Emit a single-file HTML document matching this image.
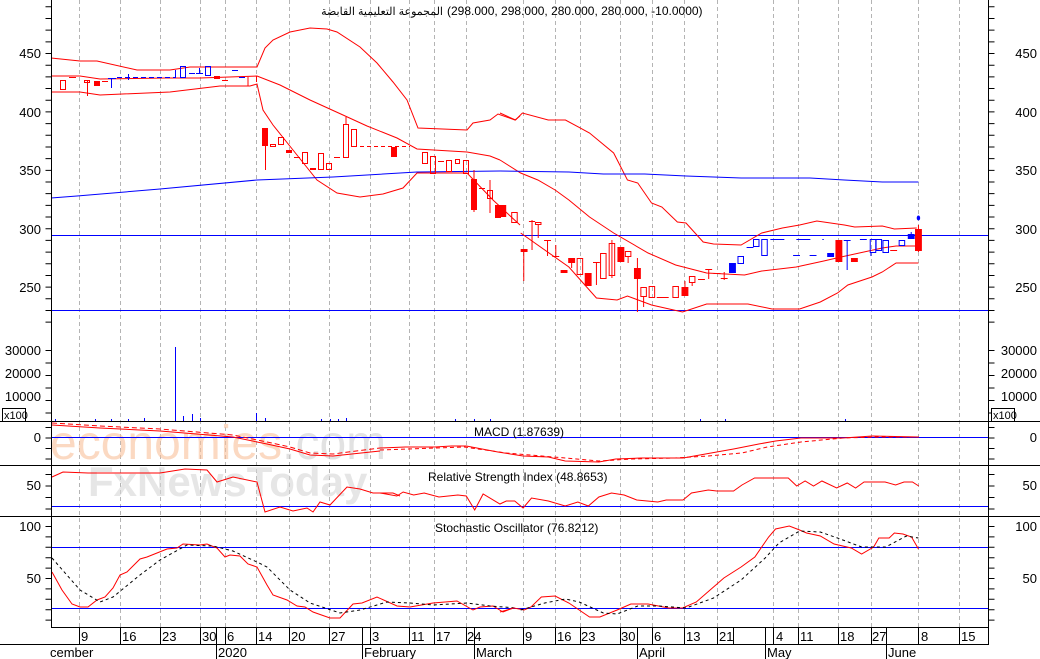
<!DOCTYPE html>
<html><head><meta charset="utf-8"><style>
html,body{margin:0;padding:0;background:#fff;}
svg{display:block;font-family:"Liberation Sans","Noto Sans CJK SC",sans-serif;}
</style></head><body>
<svg width="1040" height="659" viewBox="0 0 1040 659" xmlns="http://www.w3.org/2000/svg">
<rect width="1040" height="659" fill="#fff"/>
<!-- gridlines -->
<g stroke="#b4b4b4" stroke-width="1" stroke-dasharray="4 3">
<line x1="79.5" y1="0" x2="79.5" y2="627"/><line x1="120.5" y1="0" x2="120.5" y2="627"/><line x1="160.5" y1="0" x2="160.5" y2="627"/><line x1="200.5" y1="0" x2="200.5" y2="627"/><line x1="225.5" y1="0" x2="225.5" y2="627"/><line x1="256.5" y1="0" x2="256.5" y2="627"/><line x1="289.5" y1="0" x2="289.5" y2="627"/><line x1="329.5" y1="0" x2="329.5" y2="627"/><line x1="370.5" y1="0" x2="370.5" y2="627"/><line x1="409.5" y1="0" x2="409.5" y2="627"/><line x1="434.5" y1="0" x2="434.5" y2="627"/><line x1="466.5" y1="0" x2="466.5" y2="627"/><line x1="523.5" y1="0" x2="523.5" y2="627"/><line x1="555.5" y1="0" x2="555.5" y2="627"/><line x1="580.5" y1="0" x2="580.5" y2="627"/><line x1="620.5" y1="0" x2="620.5" y2="627"/><line x1="652.5" y1="0" x2="652.5" y2="627"/><line x1="684.5" y1="0" x2="684.5" y2="627"/><line x1="717.5" y1="0" x2="717.5" y2="627"/><line x1="773.5" y1="0" x2="773.5" y2="627"/><line x1="798.5" y1="0" x2="798.5" y2="627"/><line x1="838.5" y1="0" x2="838.5" y2="627"/><line x1="871.5" y1="0" x2="871.5" y2="627"/><line x1="918.5" y1="0" x2="918.5" y2="627"/><line x1="959.5" y1="0" x2="959.5" y2="627"/>
</g>
<!-- watermark -->
<text x="50" y="459" font-size="48" fill="#f9c09a" opacity="0.6" font-family="Liberation Sans,sans-serif">economies<tspan fill="#d0d0d0">.com</tspan></text>
<text x="88" y="496" font-size="42" fill="#d6d6d6" opacity="0.6" font-weight="bold" font-family="Liberation Sans,sans-serif">FxNewsToday</text>

<!-- horizontal blue lines -->
<g stroke="#0000ff" stroke-width="1">
<line x1="51" y1="235.5" x2="989" y2="235.5"/><line x1="51" y1="310.5" x2="989" y2="310.5"/>
<line x1="51" y1="437.5" x2="989" y2="437.5"/>
<line x1="51" y1="506.5" x2="989" y2="506.5"/>
<line x1="51" y1="547.5" x2="989" y2="547.5"/><line x1="51" y1="608.5" x2="989" y2="608.5"/>
</g>

<!-- main left part bands (real coords) -->
<g fill="none" stroke="#ff0000" stroke-width="1">
<polyline points="51,58 80,61 97,61 137,70 170,70 190,67 257,67 265,48 273,40 290,32 310,28 327,29 337,32 360,47 377,63 393,82 407,100 418,128 467,130 473,123 490,120 498,114 515,120 520,116"/>
<polyline points="51,76 80,76 100,79 165,78 200,78 257,76 280,85 310,100 343,115 367,126 397,138 417,149 467,152 490,156 500,160"/>
<polyline points="51,92 80,92 100,95 170,92 220,86 250,86 257,84 263,110 273,125 293,150 317,180 337,193 360,197 383,194 403,188 417,173 467,173 493,200 507,213 520,225"/>
</g>
<polyline fill="none" stroke="#0000ff" points="51,198 77,196 160,189 257,180 333,177 417,172 500,171"/>
<g fill="none" stroke="#ff0000" stroke-width="1" transform="translate(500,0) scale(0.3444,1)">
<polyline vector-effect="non-scaling-stroke" points="0,113 45,120 65,113 140,120 190,120 260,133 330,153 370,180 400,183 440,203 470,207 515,222 540,223 590,242 620,244 700,245 760,233 820,228 870,225 920,221 1000,225 1030,227 1110,226 1145,229 1210,228"/>
<polyline vector-effect="non-scaling-stroke" points="0,160 60,173 110,180 160,190 200,200 260,217 330,233 430,253 510,265 600,273 710,275 760,271 860,267 940,261 990,257 1110,248 1150,246 1210,246"/>
<polyline vector-effect="non-scaling-stroke" points="60,233 200,267 280,298 340,300 370,296 440,305 530,312 600,304 720,304 790,309 870,309 930,302 980,293 1010,285 1080,277 1110,272 1150,263 1215,263"/>
<polyline vector-effect="non-scaling-stroke" stroke="#0000ff" points="0,171 200,172 300,174 420,174 540,176 620,177 700,178 900,178 1000,180 1110,182 1215,182"/>
</g>

<!-- candles left (real coords) -->
<g stroke="#ff0000" stroke-width="1" fill="none">
<rect x="60.5" y="80.5" width="5" height="9"/>
<line x1="69" y1="77.5" x2="76" y2="77.5"/>
<line x1="87.5" y1="80" x2="87.5" y2="96"/><rect x="84.5" y="80.5" width="5" height="2"/>
<rect x="94" y="81" width="6" height="5" fill="#f00" stroke="none"/>
<line x1="102" y1="81.5" x2="108" y2="81.5"/>
<line x1="248" y1="77" x2="248" y2="86"/><line x1="256.5" y1="76" x2="256.5" y2="82"/>
<rect x="214" y="76" width="6" height="3" fill="#f00" stroke="none"/>
<line x1="222" y1="80.5" x2="228" y2="80.5"/>
<rect x="262" y="128" width="6" height="18" fill="#f00" stroke="none"/><line x1="265.5" y1="128" x2="265.5" y2="170"/>
<rect x="270.5" y="144.5" width="5" height="2"/>
<rect x="278.5" y="137.5" width="5" height="7"/>
<rect x="286" y="150" width="6" height="3" fill="#f00" stroke="none"/>
<line x1="294" y1="157.5" x2="300" y2="157.5"/>
<rect x="302.5" y="152.5" width="5" height="11"/>
<rect x="310" y="168" width="6" height="2" fill="#f00" stroke="none"/>
<rect x="318.5" y="153.5" width="5" height="16"/>
<rect x="326.5" y="163.5" width="5" height="6"/>
<line x1="334" y1="157.5" x2="340" y2="157.5"/>
<rect x="343.5" y="124.5" width="5" height="33"/><line x1="346" y1="117" x2="346" y2="124"/>
<rect x="351.5" y="129.5" width="5" height="17"/>
<line x1="360" y1="146.5" x2="410" y2="146.5" stroke-dasharray="4 3"/>
<rect x="391" y="147" width="6" height="10" fill="#f00" stroke="none"/>
<rect x="422.5" y="152.5" width="5" height="11"/>
<rect x="430.5" y="156.5" width="5" height="17"/>
<line x1="438" y1="161.5" x2="444" y2="161.5"/>
<rect x="446.5" y="160.5" width="5" height="11"/>
<rect x="455.5" y="159.5" width="4" height="4"/>
<rect x="463.5" y="160.5" width="5" height="13"/>
<rect x="471" y="179" width="6" height="31" fill="#f00" stroke="none"/><line x1="474" y1="170" x2="474" y2="212"/>
<line x1="479" y1="188.5" x2="485" y2="188.5"/>
<rect x="487.5" y="190.5" width="5" height="8"/><line x1="490" y1="180" x2="490" y2="213"/>
<rect x="495" y="205" width="6" height="13" fill="#f00" stroke="none"/>
</g>
<g stroke="#0000ff" stroke-width="1" fill="none">
<line x1="108" y1="78.5" x2="116" y2="78.5"/><line x1="111.5" y1="78" x2="111.5" y2="88"/>
<line x1="117" y1="77.5" x2="175" y2="77.5" stroke-dasharray="5 3"/>
<line x1="128.5" y1="74" x2="128.5" y2="80"/>
<line x1="175.5" y1="70" x2="175.5" y2="78"/>
<rect x="180.5" y="66.5" width="5" height="11"/>
<line x1="189" y1="73.5" x2="195" y2="73.5"/>
<line x1="199.5" y1="68" x2="199.5" y2="74"/><line x1="196" y1="73.5" x2="203" y2="73.5"/>
<rect x="205.5" y="66.5" width="5" height="9"/>
<line x1="232" y1="70.5" x2="238" y2="70.5"/>
<line x1="239" y1="77.5" x2="245" y2="77.5"/>
</g>
<!-- candles right (zoom5 raw X) -->
<g transform="translate(500,0) scale(0.3444,1)" stroke-width="1">
<g fill="#f00"><rect x="0" y="205" width="18" height="12"/><rect x="60" y="249" width="20" height="3"/><rect x="176" y="270" width="20" height="3"/><rect x="198" y="258" width="20" height="5"/><rect x="246" y="273" width="20" height="13"/><rect x="341" y="247" width="20" height="15"/><rect x="389" y="268" width="20" height="11"/><rect x="527" y="287" width="20" height="9"/><rect x="974" y="240" width="20" height="22"/><rect x="1019" y="258" width="20" height="4"/><rect x="1205" y="229" width="20" height="22"/></g>
<g fill="none" stroke="#f00">
<rect vector-effect="non-scaling-stroke" x="34" y="212.5" width="16" height="10"/>
<rect vector-effect="non-scaling-stroke" x="103" y="222.5" width="16" height="2"/>
<rect vector-effect="non-scaling-stroke" x="224" y="258.5" width="16" height="16"/>
<rect vector-effect="non-scaling-stroke" x="292" y="253.5" width="16" height="25"/>
<rect vector-effect="non-scaling-stroke" x="317" y="243.5" width="16" height="32"/>
<rect vector-effect="non-scaling-stroke" x="364" y="251.5" width="16" height="5"/>
<rect vector-effect="non-scaling-stroke" x="409" y="287.5" width="16" height="9"/>
<rect vector-effect="non-scaling-stroke" x="433" y="286.5" width="16" height="11"/>
<rect vector-effect="non-scaling-stroke" x="502" y="286.5" width="16" height="11"/>
<rect vector-effect="non-scaling-stroke" x="550" y="276.5" width="16" height="6"/>
<line vector-effect="non-scaling-stroke" x1="69" y1="249" x2="69" y2="281"/>
<line vector-effect="non-scaling-stroke" x1="93" y1="220" x2="93" y2="250"/><line vector-effect="non-scaling-stroke" x1="84" y1="221.5" x2="102" y2="221.5"/>
<line vector-effect="non-scaling-stroke" x1="111" y1="224" x2="111" y2="238"/>
<line vector-effect="non-scaling-stroke" x1="138" y1="240" x2="138" y2="256"/><line vector-effect="non-scaling-stroke" x1="128" y1="240.5" x2="148" y2="240.5"/>
<line vector-effect="non-scaling-stroke" x1="162" y1="245" x2="162" y2="256"/><line vector-effect="non-scaling-stroke" x1="152" y1="256.5" x2="172" y2="256.5"/>
<line vector-effect="non-scaling-stroke" x1="208" y1="263" x2="208" y2="268"/>
<line vector-effect="non-scaling-stroke" x1="280" y1="262" x2="280" y2="285"/><line vector-effect="non-scaling-stroke" x1="270" y1="262.5" x2="290" y2="262.5"/>
<line vector-effect="non-scaling-stroke" x1="325" y1="240" x2="325" y2="278"/>
<line vector-effect="non-scaling-stroke" x1="372" y1="256" x2="372" y2="263"/>
<line vector-effect="non-scaling-stroke" x1="399" y1="258" x2="399" y2="312"/>
<line vector-effect="non-scaling-stroke" x1="417" y1="296" x2="417" y2="307"/>
<line vector-effect="non-scaling-stroke" x1="455" y1="297.5" x2="500" y2="297.5" stroke-dasharray="12 6"/>
<line vector-effect="non-scaling-stroke" x1="537" y1="281" x2="537" y2="287"/>
<line vector-effect="non-scaling-stroke" x1="558" y1="282" x2="558" y2="286"/>
<line vector-effect="non-scaling-stroke" x1="575" y1="279.5" x2="595" y2="279.5"/>
<line vector-effect="non-scaling-stroke" x1="596" y1="269.5" x2="616" y2="269.5"/><line vector-effect="non-scaling-stroke" x1="606" y1="269" x2="606" y2="279"/>
<line vector-effect="non-scaling-stroke" x1="620" y1="273.5" x2="640" y2="273.5"/>
<line vector-effect="non-scaling-stroke" x1="641" y1="278.5" x2="661" y2="278.5"/><line vector-effect="non-scaling-stroke" x1="651" y1="272" x2="651" y2="280"/>
<line vector-effect="non-scaling-stroke" x1="1133" y1="250.5" x2="1153" y2="250.5"/>
<line vector-effect="non-scaling-stroke" x1="1215" y1="225" x2="1215" y2="252"/>
</g>
<g fill="#00f"><rect x="665" y="263" width="20" height="10"/><rect x="950" y="253" width="20" height="4"/><rect x="1184" y="234" width="20" height="5"/></g>
<g fill="none" stroke="#00f">
<rect vector-effect="non-scaling-stroke" x="691" y="256.5" width="16" height="7"/>
<rect vector-effect="non-scaling-stroke" x="736" y="239.5" width="16" height="7"/>
<rect vector-effect="non-scaling-stroke" x="760" y="239.5" width="16" height="16"/>
<rect vector-effect="non-scaling-stroke" x="1075" y="239.5" width="16" height="13"/>
<rect vector-effect="non-scaling-stroke" x="1092" y="239.5" width="16" height="11"/>
<rect vector-effect="non-scaling-stroke" x="1112" y="240.5" width="16" height="12"/>
<rect vector-effect="non-scaling-stroke" x="1159" y="240.5" width="16" height="5"/>
<line vector-effect="non-scaling-stroke" x1="716" y1="247.5" x2="736" y2="247.5"/>
<line vector-effect="non-scaling-stroke" x1="785" y1="239.5" x2="940" y2="239.5" stroke-dasharray="14 12"/>
<line vector-effect="non-scaling-stroke" x1="851" y1="255.5" x2="871" y2="255.5"/>
<line vector-effect="non-scaling-stroke" x1="899" y1="255.5" x2="919" y2="255.5"/>
<line vector-effect="non-scaling-stroke" x1="998" y1="240.5" x2="1018" y2="240.5"/><line vector-effect="non-scaling-stroke" x1="1008" y1="240" x2="1008" y2="270"/>
<line vector-effect="non-scaling-stroke" x1="1045" y1="239.5" x2="1065" y2="239.5"/>
<line vector-effect="non-scaling-stroke" x1="1077" y1="252" x2="1077" y2="256"/>
<line vector-effect="non-scaling-stroke" x1="1194" y1="232" x2="1194" y2="234"/>
</g>
<ellipse cx="1215" cy="218" rx="5" ry="2.5" fill="#00f"/>
</g>

<!-- volume -->
<g stroke="#0000ff" stroke-width="1">
<line x1="175.5" y1="347" x2="175.5" y2="421"/>
<line x1="183.5" y1="416" x2="183.5" y2="421"/><line x1="192.5" y1="414" x2="192.5" y2="421"/><line x1="200.5" y1="418" x2="200.5" y2="421"/>
<line x1="256.5" y1="413" x2="256.5" y2="421"/><line x1="265.5" y1="418" x2="265.5" y2="421"/>
<line x1="55.5" y1="419" x2="55.5" y2="421"/><line x1="95.5" y1="419" x2="95.5" y2="421"/><line x1="111.5" y1="419" x2="111.5" y2="421"/><line x1="128.5" y1="419" x2="128.5" y2="421"/><line x1="144.5" y1="418" x2="144.5" y2="421"/>
<line x1="321.5" y1="419" x2="321.5" y2="421"/><line x1="330.5" y1="419" x2="330.5" y2="421"/><line x1="338.5" y1="419" x2="338.5" y2="421"/><line x1="346.5" y1="418" x2="346.5" y2="421"/>
<line x1="455.5" y1="419" x2="455.5" y2="421"/><line x1="474.5" y1="419" x2="474.5" y2="421"/><line x1="490.5" y1="419" x2="490.5" y2="421"/>
<line x1="700.5" y1="419" x2="700.5" y2="421"/><line x1="725.5" y1="419" x2="725.5" y2="421"/><line x1="845.5" y1="419" x2="845.5" y2="421"/>
</g>

<!-- MACD -->
<g fill="none" stroke="#ff0000">
<polyline points="52,423 100,426 160,429 233,435 267,442 290,447 310,453 333,454 380,448" stroke-dasharray="5 3"/>
<polyline points="52,425 100,428 160,431 233,437 267,444 290,449 310,455 333,456 380,451"/>
</g>
<g fill="none" stroke="#ff0000" transform="translate(380,0) scale(0.4209,1)">
<polyline vector-effect="non-scaling-stroke" points="0,448 60,447 130,447 170,446 205,446 230,448 280,452 340,456 400,457 440,461 520,462 560,459 620,458 720,458 760,455 840,449 900,444 940,441 1000,438 1100,438 1170,436 1280,437"/>
<polyline vector-effect="non-scaling-stroke" stroke-dasharray="4 3" points="0,450 200,447 300,453 440,458 520,461 600,459 700,458 780,456 860,453 920,447 1000,442 1100,438 1180,437 1280,437"/>
<polyline vector-effect="non-scaling-stroke" points="0,493 40,496 55,492 80,495 105,493 140,497 185,495 205,496 225,510 245,494 285,504 300,501 320,501 340,508 360,498 400,501 440,506 470,502 495,506 520,497 550,493 580,495 610,500 660,502 680,500 720,500 740,493 780,490 800,491 840,491 860,485 890,478 970,478 990,486 1010,481 1030,486 1050,481 1085,488 1110,483 1130,488 1150,482 1200,482 1225,485 1245,482 1265,482 1280,486"/>
</g>
<!-- RSI left -->
<polyline fill="none" stroke="#ff0000" points="52,477 63,472 88,473 123,473 160,473 185,469 207,470 217,482 233,477 257,482 265,512 280,507 293,511 307,508 313,512 320,502 330,505 347,487 360,489 373,493 393,493 400,496"/>

<!-- Stochastic left -->
<polyline fill="none" stroke="#ff0000" points="52,572 62,590 72,604 80,607 88,607 97,600 105,597 113,588 120,575 127,572 140,559 147,557 157,553 167,549 177,548 183,544 200,545 207,544 217,548 225,557 230,555 240,556 248,564 257,567 267,585 273,595 287,600 297,606 305,607 313,612 330,618 340,618 353,604 362,603 377,597 397,606 410,607 433,603 457,601 473,610 480,607 493,606 503,612 513,608"/>
<polyline fill="none" stroke="#000" stroke-dasharray="3 3" points="52,558 80,590 100,602 113,597 140,575 160,560 187,545 213,546 233,551 257,562 267,567 290,590 310,603 340,613 360,610 387,602 410,603 433,605 467,603 490,606 517,608"/>
<g fill="none" transform="translate(500,0) scale(0.3444,1)">
<polyline vector-effect="non-scaling-stroke" stroke="#ff0000" points="0,612 40,608 70,610 90,607 120,597 160,596 200,603 260,617 290,617 340,610 380,604 430,604 490,608 530,608 570,602 610,590 650,578 700,567 740,557 780,537 800,529 840,526 870,530 890,533 930,536 970,544 1020,548 1050,554 1085,547 1100,538 1130,538 1145,533 1170,534 1195,537 1215,549"/>
<polyline vector-effect="non-scaling-stroke" stroke="#000" stroke-dasharray="3 3" points="60,610 130,603 190,599 230,602 300,613 340,614 400,606 460,606 540,608 620,598 700,580 770,558 810,543 870,531 930,532 980,538 1050,547 1120,547 1180,536 1215,538"/>
</g>

<!-- axes and dividers -->
<g stroke="#000" stroke-width="1">
<line x1="51.5" y1="0" x2="51.5" y2="627"/>
<line x1="988.5" y1="0" x2="988.5" y2="644"/>
<line x1="0" y1="421.5" x2="1040" y2="421.5"/>
<line x1="0" y1="465.5" x2="1040" y2="465.5"/>
<line x1="0" y1="516.5" x2="1040" y2="516.5"/>
<line x1="51" y1="627.5" x2="989" y2="627.5"/>
<line x1="0" y1="644.5" x2="989" y2="644.5"/>
</g>
<g stroke="#000" fill="none">
<line x1="48.5" y1="6.3" x2="48.5" y2="330" stroke-dasharray="1 10.68" stroke-width="6"/>
<line x1="991.5" y1="6.3" x2="991.5" y2="330" stroke-dasharray="1 10.68" stroke-width="6"/>
<line x1="48.5" y1="427" x2="48.5" y2="460" stroke-dasharray="1 9.5" stroke-width="6"/>
<line x1="991.5" y1="427" x2="991.5" y2="460" stroke-dasharray="1 9.5" stroke-width="6"/>
<line x1="48.5" y1="474" x2="48.5" y2="510" stroke-dasharray="1 10.5" stroke-width="6"/>
<line x1="991.5" y1="474" x2="991.5" y2="510" stroke-dasharray="1 10.5" stroke-width="6"/>
<line x1="48.5" y1="526" x2="48.5" y2="625" stroke-dasharray="1 9.4" stroke-width="6"/>
<line x1="991.5" y1="526" x2="991.5" y2="625" stroke-dasharray="1 9.4" stroke-width="6"/>
<line x1="48.5" y1="350" x2="48.5" y2="420" stroke-dasharray="1 11.5" stroke-width="6"/>
<line x1="991.5" y1="350" x2="991.5" y2="420" stroke-dasharray="1 11.5" stroke-width="6"/>
</g>
<!-- date ticks -->
<g stroke="#000" stroke-width="1">
<line x1="79.5" y1="627" x2="79.5" y2="644"/><line x1="120.5" y1="627" x2="120.5" y2="644"/><line x1="160.5" y1="627" x2="160.5" y2="644"/><line x1="200.5" y1="627" x2="200.5" y2="644"/><line x1="216.5" y1="627" x2="216.5" y2="659"/><line x1="225.5" y1="627" x2="225.5" y2="644"/><line x1="256.5" y1="627" x2="256.5" y2="644"/><line x1="289.5" y1="627" x2="289.5" y2="644"/><line x1="329.5" y1="627" x2="329.5" y2="644"/><line x1="362.5" y1="627" x2="362.5" y2="659"/><line x1="370.5" y1="627" x2="370.5" y2="644"/><line x1="409.5" y1="627" x2="409.5" y2="644"/><line x1="434.5" y1="627" x2="434.5" y2="644"/><line x1="466.5" y1="627" x2="466.5" y2="644"/><line x1="474.5" y1="627" x2="474.5" y2="659"/>
<line x1="523.5" y1="627" x2="523.5" y2="644"/><line x1="555.5" y1="627" x2="555.5" y2="644"/><line x1="580.5" y1="627" x2="580.5" y2="644"/><line x1="620.5" y1="627" x2="620.5" y2="644"/><line x1="637.5" y1="627" x2="637.5" y2="659"/><line x1="652.5" y1="627" x2="652.5" y2="644"/><line x1="684.5" y1="627" x2="684.5" y2="644"/><line x1="717.5" y1="627" x2="717.5" y2="644"/><line x1="733.5" y1="627" x2="733.5" y2="644"/><line x1="765.5" y1="627" x2="765.5" y2="659"/><line x1="773.5" y1="627" x2="773.5" y2="644"/><line x1="798.5" y1="627" x2="798.5" y2="644"/><line x1="838.5" y1="627" x2="838.5" y2="644"/><line x1="871.5" y1="627" x2="871.5" y2="644"/><line x1="886.5" y1="627" x2="886.5" y2="659"/><line x1="918.5" y1="627" x2="918.5" y2="644"/><line x1="959.5" y1="627" x2="959.5" y2="644"/>
</g>
<!-- x100 boxes -->
<rect x="2.5" y="408.5" width="23" height="13" fill="#fff" stroke="#000"/>
<text x="4" y="419" font-size="11" fill="#000">x100</text>
<rect x="991.5" y="408.5" width="23" height="13" fill="#fff" stroke="#000"/>
<text x="993" y="419" font-size="11" fill="#000">x100</text>

<!-- axis labels -->
<g font-size="13" fill="#000" text-anchor="end">
<text x="41" y="58">450</text><text x="41" y="117">400</text><text x="41" y="175">350</text><text x="41" y="234">300</text><text x="41" y="292">250</text>
<text x="41" y="355">30000</text><text x="41" y="378">20000</text><text x="41" y="401">10000</text>
<text x="41" y="442">0</text><text x="41" y="490">50</text><text x="41" y="531">100</text><text x="41" y="583">50</text>
<text x="1037" y="58">450</text><text x="1037" y="117">400</text><text x="1037" y="175">350</text><text x="1037" y="234">300</text><text x="1037" y="292">250</text>
<text x="1037" y="355">30000</text><text x="1037" y="378">20000</text><text x="1037" y="401">10000</text>
<text x="1037" y="442">0</text><text x="1037" y="490">50</text><text x="1037" y="531">100</text><text x="1037" y="583">50</text>
</g>
<g font-size="13" fill="#000">
<text x="81" y="641">9</text><text x="122" y="641">16</text><text x="162" y="641">23</text><text x="202" y="641">30</text><text x="227" y="641">6</text><text x="258" y="641">14</text><text x="291" y="641">20</text><text x="331" y="641">27</text><text x="372" y="641">3</text><text x="411" y="641">11</text><text x="436" y="641">17</text><text x="467" y="641">24</text>
<text x="525" y="641">9</text><text x="557" y="641">16</text><text x="581" y="641">23</text><text x="621" y="641">30</text><text x="654" y="641">6</text><text x="686" y="641">13</text><text x="719" y="641">21</text><text x="776" y="641">4</text><text x="800" y="641">11</text><text x="840" y="641">18</text><text x="872" y="641">27</text><text x="921" y="641">8</text><text x="961" y="641">15</text>
<text x="50" y="657">cember</text><text x="218" y="657">2020</text><text x="364" y="657">February</text><text x="476" y="657">March</text><text x="639" y="657">April</text><text x="767" y="657">May</text><text x="888" y="657">June</text>
</g>
<!-- titles -->
<g font-size="12" fill="#000">
<text x="443" y="15" text-anchor="end" font-size="11">المجموعة التعليمية القابضة</text>
<text x="447" y="15">(298.000, 298.000, 280.000, 280.000, -10.0000)</text>
<text x="474" y="436">MACD (1.87639)</text>
<text x="428" y="481">Relative Strength Index (48.8653)</text>
<text x="435" y="532">Stochastic Oscillator (76.8212)</text>
</g>
</svg>
</body></html>
